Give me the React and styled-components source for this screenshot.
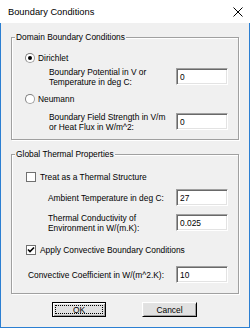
import React from "react";
import styled, { createGlobalStyle } from "styled-components";

const Global = createGlobalStyle`
  html, body { margin: 0; padding: 0; background: #ffffff; }
  * { box-sizing: border-box; }
`;

const Window = styled.div`
  width: 250px;
  height: 328px;
  display: flex;
  flex-direction: column;
  font-family: "Liberation Sans", Arial, sans-serif;
  font-size: 8.4px;
  color: #000;
`;

const TitleBar = styled.div`
  height: 23px;
  flex: none;
  background: #ffffff;
  display: flex;
  align-items: center;
  justify-content: space-between;
  padding: 0 7px 0 8px;
  font-size: 9.3px;
`;

const Body = styled.div`
  flex: 1;
  background: #f0f0f0;
  border: 1px solid #2b7fd2;
  border-top: none;
  padding: 14px 10px 0 10px;
  display: flex;
  flex-direction: column;
`;

const Group = styled.div`
  position: relative;
  border: 1px solid #a0a0a0;
  box-shadow: inset 1px 1px 0 #ffffff, 1px 1px 0 #ffffff;
  padding: 0 10px ${(p) => p.$pb}px 13px;
  margin-top: ${(p) => p.$mt}px;
  display: flex;
  flex-direction: column;
`;

const Legend = styled.span`
  position: absolute;
  left: 3px;
  top: -6px;
  line-height: 10px;
  padding: 0 1px;
  background: #f0f0f0;
`;

const OptionRow = styled.div`
  display: flex;
  align-items: center;
  height: 12px;
  margin-top: ${(p) => p.$mt}px;
  margin-left: ${(p) => p.$ml || 0}px;
  gap: ${(p) => p.$gap}px;
`;

const Radio = styled.span`
  width: 10px;
  height: 10px;
  border-radius: 50%;
  border: 1px solid #a0a0a0;
  border-top-color: #808080;
  border-left-color: #808080;
  background: #ffffff;
  display: flex;
  align-items: center;
  justify-content: center;
  flex: none;
  &::after {
    content: "";
    width: 4px;
    height: 4px;
    border-radius: 50%;
    background: ${(p) => (p.$on ? "#000" : "transparent")};
  }
`;

const Check = styled.span`
  width: 10px;
  height: 10px;
  border: 1px solid #707070;
  background: #ffffff;
  flex: none;
  display: flex;
  align-items: center;
  justify-content: center;
`;

const FieldRow = styled.div`
  display: flex;
  align-items: center;
  justify-content: space-between;
  height: 17px;
  margin-top: ${(p) => p.$mt}px;
  padding-left: ${(p) => p.$indent}px;
`;

const Label = styled.div`
  line-height: 10px;
`;

const Input = styled.div`
  width: 52px;
  height: 17px;
  flex: none;
  background: #ffffff;
  border-top: 1px solid #a0a0a0;
  border-left: 1px solid #a0a0a0;
  border-right: 1px solid #ffffff;
  border-bottom: 1px solid #ffffff;
  box-shadow: inset 1px 1px 0 #696969, inset -1px -1px 0 #e3e3e3;
  padding-left: 3px;
  display: flex;
  align-items: center;
`;

const ButtonRow = styled.div`
  display: flex;
  justify-content: center;
  gap: 36px;
  margin-top: 8px;
  padding-right: 1px;
`;

const Button = styled.div`
  width: ${(p) => p.$w}px;
  height: 15px;
  background: #e1e1e1;
  border: 1px solid ${(p) => (p.$default ? "#000" : "#ffffff")};
  border-right-color: #000;
  border-bottom-color: #000;
  box-shadow: ${(p) =>
    p.$default
      ? "inset 1px 1px 0 #fff, inset -1px -1px 0 #a0a0a0"
      : "inset 1px 1px 0 #e3e3e3, inset -1px -1px 0 #a0a0a0"};
  display: flex;
  align-items: center;
  justify-content: center;
  position: relative;
`;

const Focus = styled.span`
  position: absolute;
  inset: 2px;
  border: 1px dotted #000;
`;

const CloseIcon = () => (
  <svg width="10" height="10" viewBox="0 0 10 10">
    <path d="M0.5 0.5 L9.5 9.5 M9.5 0.5 L0.5 9.5" stroke="#000" strokeWidth="1" fill="none" />
  </svg>
);

const Tick = () => (
  <svg width="8" height="8" viewBox="0 0 8 8">
    <path d="M1 3.5 L3 5.5 L7 1.5" stroke="#000" strokeWidth="1.6" fill="none" />
  </svg>
);

export default function App() {
  return (
    <>
      <Global />
      <Window>
        <TitleBar>
          <span>Boundary Conditions</span>
          <CloseIcon />
        </TitleBar>
        <Body>
          <Group $mt={0} $pb={9}>
            <Legend>Domain Boundary Conditions</Legend>
            <OptionRow $mt={14} $gap={3}>
              <Radio $on />
              <span>Dirichlet</span>
            </OptionRow>
            <FieldRow $mt={4} $indent={24}>
              <Label>
                Boundary Potential in V or
                <br />
                Temperature in deg C:
              </Label>
              <Input>0</Input>
            </FieldRow>
            <OptionRow $mt={8} $gap={3}>
              <Radio />
              <span>Neumann</span>
            </OptionRow>
            <FieldRow $mt={8} $indent={24}>
              <Label>
                Boundary Field Strength in V/m
                <br />
                or Heat Flux in W/m^2:
              </Label>
              <Input>0</Input>
            </FieldRow>
          </Group>
          <Group $mt={14} $pb={10}>
            <Legend>Global Thermal Properties</Legend>
            <OptionRow $mt={16} $ml={1} $gap={4}>
              <Check />
              <span>Treat as a Thermal Structure</span>
            </OptionRow>
            <FieldRow $mt={6} $indent={23}>
              <Label>Ambient Temperature in deg C:</Label>
              <Input>27</Input>
            </FieldRow>
            <FieldRow $mt={8} $indent={23}>
              <Label>
                Thermal Conductivity of
                <br />
                Environment in W/(m.K):
              </Label>
              <Input>0.025</Input>
            </FieldRow>
            <OptionRow $mt={13} $ml={1} $gap={4}>
              <Check>
                <Tick />
              </Check>
              <span>Apply Convective Boundary Conditions</span>
            </OptionRow>
            <FieldRow $mt={10} $indent={3}>
              <Label>Convective Coefficient in W/(m^2.K):</Label>
              <Input>10</Input>
            </FieldRow>
          </Group>
          <ButtonRow>
            <Button $default $w={54}>
              <Focus />
              OK
            </Button>
            <Button $w={55}>Cancel</Button>
          </ButtonRow>
        </Body>
      </Window>
    </>
  );
}
